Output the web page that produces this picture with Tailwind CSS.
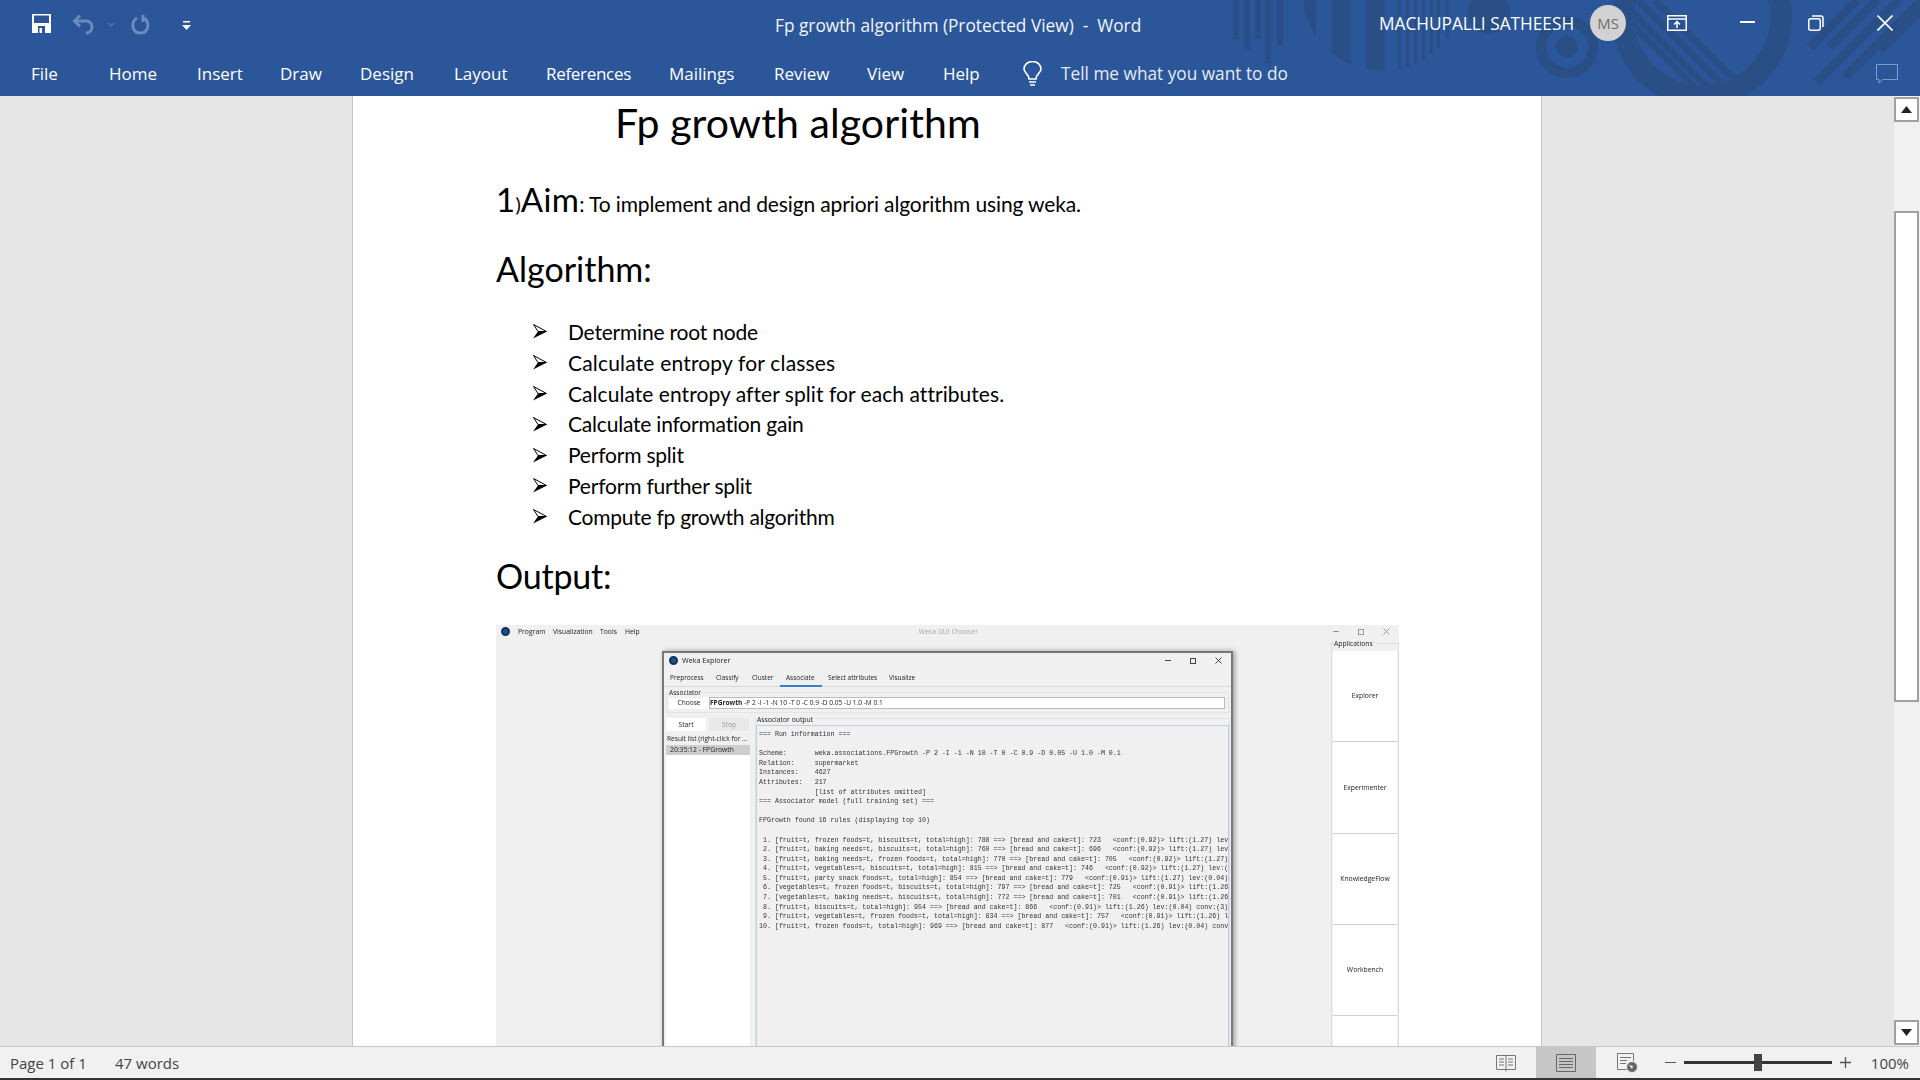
<!DOCTYPE html>
<html lang="en">
<head>
  <meta charset="UTF-8" />
  <meta name="viewport" content="width=device-width, initial-scale=1" />
  <title>Fp growth algorithm (Protected View) - Word</title>
  <script src="https://cdn.jsdelivr.net/npm/@tailwindcss/browser@4"></script>
</head>
<body class="h-screen w-screen overflow-hidden flex flex-col bg-[#e6e6e6] font-['Open_Sans',sans-serif]">

  <!-- Title bar and ribbon tabs -->
  <header class="relative h-[96px] shrink-0 bg-[#2b579a] text-white overflow-hidden">
    <!-- office background art -->
    <svg class="absolute inset-0" width="1920" height="96" viewBox="0 0 1920 96" fill="#2a4f86">
      <defs>
        <clipPath id="innerCircle"><circle cx="1702" cy="17" r="68" /></clipPath>
      </defs>
      <rect x="1233" y="0" width="6" height="39" />
      <rect x="1244" y="0" width="6" height="50" />
      <rect x="1255" y="0" width="6" height="39" />
      <rect x="1265" y="0" width="6" height="63" />
      <rect x="1277" y="0" width="6" height="46" />
      <path d="M1303 0 H1316 V36 Q1305 20 1303 0 Z" />
      <path d="M1332 0 H1351 V65 Q1340 60 1332 52 Z" />
      <path d="M1366 0 H1385 V71 Q1375 71 1366 69 Z" />
      <rect x="1398" y="0" width="3" height="69" />
      <rect x="1406" y="0" width="3" height="67" />
      <rect x="1414" y="0" width="3" height="64" />
      <rect x="1422" y="0" width="3" height="60" />
      <rect x="1430" y="0" width="3" height="54" />
      <rect x="1437" y="0" width="3" height="48" />
      <rect x="1446" y="0" width="3" height="38" />
      <circle cx="1489" cy="13" r="21" />
      <circle cx="1567" cy="47" r="26" fill="none" stroke="#2a4f86" stroke-width="10" />
      <circle cx="1567" cy="47" r="11" />
      <circle cx="1702" cy="17" r="79" fill="none" stroke="#2a4f86" stroke-width="22" />
      <g clip-path="url(#innerCircle)" stroke="#2a4f86" stroke-width="7">
        <line x1="1655" y1="0" x2="1755" y2="100" />
        <line x1="1638" y1="0" x2="1738" y2="100" />
        <line x1="1620" y1="0" x2="1720" y2="100" />
        <line x1="1608" y1="0" x2="1708" y2="100" />
      </g>
      <g stroke="#2a4f86" stroke-width="9">
        <line x1="1810" y1="47" x2="1857" y2="0" />
        <line x1="1830" y1="47" x2="1877" y2="0" />
        <line x1="1817" y1="82" x2="1899" y2="0" />
        <line x1="1845" y1="77" x2="1922" y2="0" />
        <line x1="1880" y1="50" x2="1930" y2="0" />
      </g>
    </svg>

    <div class="relative flex items-center h-[50px]">
      <!-- quick access toolbar -->
      <div class="flex items-center h-full pl-[32px] w-[400px] shrink-0">
        <svg width="19" height="19" viewBox="0 0 19 19" class="mb-[3px]">
          <path d="M0 0 H19 V19 H0 Z M2 1.5 V9 H17 V1.5 Z" fill="white" fill-rule="evenodd" />
          <rect x="6" y="12" width="7" height="7" fill="#2b579a" />
          <rect x="7.5" y="14" width="2.5" height="5" fill="white" />
        </svg>
        <svg width="24" height="20" viewBox="0 0 24 20" class="ml-[21px]" fill="none" stroke="#6b8cbd" stroke-width="3">
          <path d="M3 6 H14 C22 6 22 18 14 18" />
          <path d="M8 0.5 L2.5 6 L8 11.5" />
        </svg>
        <svg width="8" height="6" viewBox="0 0 8 6" class="ml-[11px]" fill="none" stroke="#6b8cbd"><path d="M1 1 L4 4 L7 1" /></svg>
        <svg width="19" height="20" viewBox="0 0 19 20" class="ml-[16px]" fill="none" stroke="#6b8cbd" stroke-width="3">
          <path d="M6 3 C0 6 0 18 9.5 18 C18 18 19 7 13 3" />
          <path d="M12 0 V7" />
        </svg>
        <svg width="9" height="9" viewBox="0 0 9 9" class="ml-[32px]" fill="white">
          <rect x="1" y="0" width="7" height="1.5" />
          <path d="M0 4 H9 L4.5 9 Z" />
        </svg>
      </div>
      <div class="pl-[375px] text-[17.3px] leading-[53px] whitespace-pre text-[#f2f5fa]">Fp growth algorithm (Protected View)  -  Word</div>
      <div class="absolute left-[1379px] top-0 leading-[47px] text-[17.25px] whitespace-nowrap">MACHUPALLI SATHEESH</div>
      <div class="absolute left-[1590px] top-[5px] w-[36px] h-[36px] rounded-full bg-[#d2d2d2] text-[#6f6f6f] text-[15px] flex items-center justify-center">MS</div>
      <!-- window buttons -->
      <svg class="absolute left-[1667px] top-[15px]" width="20" height="16" viewBox="0 0 20 16" fill="none" stroke="white" stroke-width="1.5">
        <rect x="0.75" y="0.75" width="18.5" height="14.5" />
        <line x1="1" y1="4" x2="19" y2="4" />
        <path d="M10 13 V6.5 M7 9.5 L10 6.5 L13 9.5" />
      </svg>
      <div class="absolute left-[1740px] top-[21px] w-[15px] h-[2px] bg-white"></div>
      <svg class="absolute left-[1808px] top-[15px]" width="16" height="16" viewBox="0 0 16 16" fill="none" stroke="white" stroke-width="1.5">
        <rect x="0.75" y="3.75" width="11.5" height="11.5" rx="2" />
        <path d="M4 1 H13 A2 2 0 0 1 15 3 V12" />
      </svg>
      <svg class="absolute left-[1877px] top-[15px]" width="16" height="16" viewBox="0 0 16 16" stroke="white" stroke-width="1.6">
        <path d="M0.5 0.5 L15.5 15.5 M15.5 0.5 L0.5 15.5" />
      </svg>
    </div>

    <nav class="relative flex items-center h-[46px] pl-[31px] pt-[1px] text-[17px] whitespace-nowrap">
      <span class="w-[78px]">File</span>
      <span class="w-[88px]">Home</span>
      <span class="w-[83px]">Insert</span>
      <span class="w-[80px]">Draw</span>
      <span class="w-[94px]">Design</span>
      <span class="w-[92px]">Layout</span>
      <span class="w-[123px] tracking-[-0.3px]">References</span>
      <span class="w-[105px]">Mailings</span>
      <span class="w-[93px]">Review</span>
      <span class="w-[76px]">View</span>
      <span class="w-[80px]">Help</span>
      <svg width="19" height="26" viewBox="0 0 19 26" fill="none" stroke="white" stroke-width="1.6">
        <path d="M6 18 C6 13 1 12 1 8 A8.5 7.5 0 0 1 18 8 C18 12 13 13 13 18 Z" />
        <path d="M6 21 H13 M7 24 H12" />
      </svg>
      <span class="ml-[19px] text-[17.25px] text-[#e4eaf4]">Tell me what you want to do</span>
      <svg class="absolute left-[1876px] top-[14px]" width="22" height="20" viewBox="0 0 22 20" fill="none" stroke="#7f9cc6" stroke-width="1">
        <path d="M0.5 0.5 H21.5 V15.5 H7 L3 19 V15.5 H0.5 Z" />
      </svg>
    </nav>
  </header>

  <!-- Document area -->
  <main class="flex flex-1 min-h-0">
    <div class="w-[352px] shrink-0"></div>
    <article class="w-[1190px] shrink-0 bg-white border-x border-[#c6c6c6] pl-[143px] overflow-hidden text-black font-['Lato',sans-serif]">
      <h1 class="h-[56px] leading-[54px] pl-[119px] text-[41px] tracking-[0.1px] whitespace-nowrap">Fp growth algorithm</h1>
      <p class="mt-[24px] h-[48px] leading-[46px] whitespace-nowrap text-[21px] tracking-[-0.13px]"><span class="text-[33px] tracking-[0.4px]">1</span><span class="text-[20px]">)</span><span class="text-[33px] tracking-[0.4px]">Aim</span>: To implement and design apriori algorithm using weka.</p>
      <h2 class="mt-[21px] h-[48px] leading-[48px] text-[34px]">Algorithm:</h2>
      <ul class="mt-[23.6px] text-[21px] tracking-[-0.2px]">
        <li class="h-[30.8px] leading-[30px] flex items-center"><svg width="14" height="15" viewBox="0 0 14 15" class="ml-[37px] mr-[21px] shrink-0"><path d="M0.5 0.5 L13.5 7.5 H5 Z" fill="white" stroke="black" stroke-width="1" /><path d="M0 14.5 L14 7.5 H5 Z" fill="black" /></svg>Determine root node</li>
        <li class="h-[30.8px] leading-[30px] flex items-center tracking-[0.18px]"><svg width="14" height="15" viewBox="0 0 14 15" class="ml-[37px] mr-[21px] shrink-0"><path d="M0.5 0.5 L13.5 7.5 H5 Z" fill="white" stroke="black" stroke-width="1" /><path d="M0 14.5 L14 7.5 H5 Z" fill="black" /></svg>Calculate entropy for classes</li>
        <li class="h-[30.8px] leading-[30px] flex items-center tracking-[0.05px]"><svg width="14" height="15" viewBox="0 0 14 15" class="ml-[37px] mr-[21px] shrink-0"><path d="M0.5 0.5 L13.5 7.5 H5 Z" fill="white" stroke="black" stroke-width="1" /><path d="M0 14.5 L14 7.5 H5 Z" fill="black" /></svg>Calculate entropy after split for each attributes.</li>
        <li class="h-[30.8px] leading-[30px] flex items-center"><svg width="14" height="15" viewBox="0 0 14 15" class="ml-[37px] mr-[21px] shrink-0"><path d="M0.5 0.5 L13.5 7.5 H5 Z" fill="white" stroke="black" stroke-width="1" /><path d="M0 14.5 L14 7.5 H5 Z" fill="black" /></svg>Calculate information gain</li>
        <li class="h-[30.8px] leading-[30px] flex items-center"><svg width="14" height="15" viewBox="0 0 14 15" class="ml-[37px] mr-[21px] shrink-0"><path d="M0.5 0.5 L13.5 7.5 H5 Z" fill="white" stroke="black" stroke-width="1" /><path d="M0 14.5 L14 7.5 H5 Z" fill="black" /></svg>Perform split</li>
        <li class="h-[30.8px] leading-[30px] flex items-center"><svg width="14" height="15" viewBox="0 0 14 15" class="ml-[37px] mr-[21px] shrink-0"><path d="M0.5 0.5 L13.5 7.5 H5 Z" fill="white" stroke="black" stroke-width="1" /><path d="M0 14.5 L14 7.5 H5 Z" fill="black" /></svg>Perform further split</li>
        <li class="h-[30.8px] leading-[30px] flex items-center tracking-[-0.25px]"><svg width="14" height="15" viewBox="0 0 14 15" class="ml-[37px] mr-[21px] shrink-0"><path d="M0.5 0.5 L13.5 7.5 H5 Z" fill="white" stroke="black" stroke-width="1" /><path d="M0 14.5 L14 7.5 H5 Z" fill="black" /></svg>Compute fp growth algorithm</li>
      </ul>
      <h2 class="mt-[20px] h-[48px] leading-[48px] text-[34px] tracking-[-0.2px]">Output:</h2>

      <!-- Weka screenshot pasted into the document -->
      <div class="relative mt-[25px] w-[903px] h-[421px] bg-[#f0f0f0] overflow-hidden text-[#222] text-[6.8px] font-['Open_Sans',sans-serif] blur-[0.25px]">
        <div class="flex items-center h-[13px] relative">
          <span class="ml-[5px] w-[9px] h-[9px] rounded-full bg-[#1c4f8f] border-2 border-[#12305c]"></span>
          <span class="ml-[8px] w-[35px]">Program</span>
          <span class="w-[47px]">Visualization</span>
          <span class="w-[25px]">Tools</span>
          <span>Help</span>
          <span class="ml-[279px] text-[#a8a8a8]">Weka GUI Chooser</span>
          <span class="ml-auto mr-[9px] flex gap-[19px] items-center text-[#999]">
            <span class="w-[6px] h-px bg-[#999]"></span>
            <span class="w-[6px] h-[6px] border border-[#999]"></span>
            <svg width="7" height="7" viewBox="0 0 7 7" stroke="#999"><path d="M0.5 0.5 L6.5 6.5 M6.5 0.5 L0.5 6.5" /></svg>
          </span>
        </div>

        <!-- Applications panel -->
        <div class="absolute left-[835px] top-[18px] right-0 bottom-0 border border-[#dcdcdc] border-b-0 px-[1px] pt-[7px]">
          <span class="absolute left-[2px] top-[-5px] bg-[#f0f0f0] pr-[3px]">Applications</span>
          <div class="flex flex-col gap-px bg-[#cfcfcf]">
            <div class="h-[90px] bg-white flex items-center justify-center">Explorer</div>
            <div class="h-[91px] bg-white flex items-center justify-center">Experimenter</div>
            <div class="h-[90px] bg-white flex items-center justify-center">KnowledgeFlow</div>
            <div class="h-[90px] bg-white flex items-center justify-center">Workbench</div>
            <div class="h-[40px] bg-white"></div>
          </div>
        </div>

        <!-- Explorer window, sits over the chooser -->
        <div class="absolute left-[166px] top-[26px] w-[571px] h-[400px] bg-[#f0f0f0] border-2 border-[#777] border-b-0 shadow-[2px_0_5px_rgba(0,0,0,0.35)] flex flex-col">
          <div class="flex items-center h-[15px] shrink-0 pl-[5px] text-[7.2px]">
            <span class="w-[9px] h-[9px] rounded-full bg-[#1c4f8f] border-2 border-[#12305c]"></span>
            <span class="ml-[4px]">Weka Explorer</span>
            <span class="ml-auto mr-[9px] flex gap-[19px] items-center">
              <span class="w-[6px] h-px bg-[#444]"></span>
              <span class="w-[6px] h-[6px] border border-[#444]"></span>
              <svg width="7" height="7" viewBox="0 0 7 7" stroke="#444"><path d="M0.5 0.5 L6.5 6.5 M6.5 0.5 L0.5 6.5" /></svg>
            </span>
          </div>
          <div class="flex h-[19px] shrink-0 pl-[1px] border-b border-[#d8d8d8] text-[6.5px] whitespace-nowrap">
            <span class="w-[46px] pl-[5px] leading-[19px]">Preprocess</span>
            <span class="w-[36px] pl-[5px] leading-[19px]">Classify</span>
            <span class="w-[33px] pl-[5px] leading-[19px]">Cluster</span>
            <span class="w-[42px] h-[19px] pl-[6px] leading-[19px] border-b-2 border-[#3c7fc0]">Associate</span>
            <span class="w-[61px] pl-[6px] leading-[19px]">Select attributes</span>
            <span class="pl-[6px] leading-[19px]">Visualize</span>
          </div>
          <div class="relative mt-[5px] mx-[2px] h-[21px] shrink-0 border border-[#e4e4e4] flex items-start pt-[4px] pl-[2px] pr-[3px] text-[6.6px]">
            <span class="absolute left-[2px] top-[-5px] bg-[#f0f0f0] pr-[2px]">Associator</span>
            <div class="w-[40px] h-[12px] bg-white leading-[12px] text-center">Choose</div>
            <div class="flex-1 h-[12px] bg-white border border-[#bbb] leading-[10px] whitespace-nowrap"><b>FPGrowth</b> -P 2 -I -1 -N 10 -T 0 -C 0.9 -D 0.05 -U 1.0 -M 0.1</div>
          </div>
          <div class="flex flex-1 min-h-0 mt-[5px] pl-[2px]">
            <div class="w-[84px] shrink-0 flex flex-col">
              <div class="flex gap-[3px] h-[13px] shrink-0">
                <div class="w-[40px] bg-white text-center leading-[13px]">Start</div>
                <div class="w-[40px] bg-[#e8e8e8] text-[#9a9a9a] text-center leading-[13px]">Stop</div>
              </div>
              <div class="h-[13px] shrink-0 leading-[13px] mt-[1px] pl-px whitespace-nowrap overflow-hidden text-[6.6px]">Result list (right-click for ...</div>
              <div class="flex-1 bg-white">
                <div class="h-[10px] bg-[#cdcdcd] pl-[4px] leading-[10px]">20:35:12 - FPGrowth</div>
              </div>
            </div>
            <div class="relative ml-[5px] w-[475px] flex flex-col pt-[6px] border-l border-t border-r border-[#e0e0e0]">
              <span class="absolute left-[1px] top-[-4px] bg-[#f0f0f0] pr-[2px]">Associator output</span>
              <pre class="flex-1 min-h-0 overflow-hidden border border-b-0 border-[#b8d2e8] pl-[2px] pt-[4px] font-['Liberation_Mono',monospace] text-[6.63px] leading-[9.58px] text-[#333]">=== Run information ===

Scheme:       weka.associations.FPGrowth -P 2 -I -1 -N 10 -T 0 -C 0.9 -D 0.05 -U 1.0 -M 0.1
Relation:     supermarket
Instances:    4627
Attributes:   217
              [list of attributes omitted]
=== Associator model (full training set) ===

FPGrowth found 16 rules (displaying top 10)

 1. [fruit=t, frozen foods=t, biscuits=t, total=high]: 788 ==> [bread and cake=t]: 723   &lt;conf:(0.92)&gt; lift:(1.27) lev:(0.04) conv:(3.35)
 2. [fruit=t, baking needs=t, biscuits=t, total=high]: 760 ==> [bread and cake=t]: 696   &lt;conf:(0.92)&gt; lift:(1.27) lev:(0.03) conv:(3.28)
 3. [fruit=t, baking needs=t, frozen foods=t, total=high]: 770 ==> [bread and cake=t]: 705   &lt;conf:(0.92)&gt; lift:(1.27) lev:(0.03) conv:(3.27)
 4. [fruit=t, vegetables=t, biscuits=t, total=high]: 815 ==> [bread and cake=t]: 746   &lt;conf:(0.92)&gt; lift:(1.27) lev:(0.03) conv:(3.26)
 5. [fruit=t, party snack foods=t, total=high]: 854 ==> [bread and cake=t]: 779   &lt;conf:(0.91)&gt; lift:(1.27) lev:(0.04) conv:(3.15)
 6. [vegetables=t, frozen foods=t, biscuits=t, total=high]: 797 ==> [bread and cake=t]: 725   &lt;conf:(0.91)&gt; lift:(1.26) lev:(0.03) conv:(3.06)
 7. [vegetables=t, baking needs=t, biscuits=t, total=high]: 772 ==> [bread and cake=t]: 701   &lt;conf:(0.91)&gt; lift:(1.26) lev:(0.03) conv:(3.01)
 8. [fruit=t, biscuits=t, total=high]: 954 ==> [bread and cake=t]: 866   &lt;conf:(0.91)&gt; lift:(1.26) lev:(0.04) conv:(3)
 9. [fruit=t, vegetables=t, frozen foods=t, total=high]: 834 ==> [bread and cake=t]: 757   &lt;conf:(0.91)&gt; lift:(1.26) lev:(0.03) conv:(3)
10. [fruit=t, frozen foods=t, total=high]: 969 ==> [bread and cake=t]: 877   &lt;conf:(0.91)&gt; lift:(1.26) lev:(0.04) conv:(2.98)</pre>
            </div>
          </div>
        </div>
      </div>
    </article>
    <div class="flex-1"></div>

    <!-- Vertical scrollbar -->
    <div class="w-[26px] shrink-0 bg-[#f1f1f1] flex flex-col pt-px">
      <div class="h-[25px] w-[25px] shrink-0 bg-white border-2 border-[#a0a0a0] flex items-center justify-center">
        <svg width="11" height="7" viewBox="0 0 11 7" fill="#222"><path d="M5.5 0 L11 7 H0 Z" /></svg>
      </div>
      <div class="h-[89px] shrink-0"></div>
      <div class="h-[491px] w-[25px] shrink-0 bg-white border-2 border-[#a0a0a0]"></div>
      <div class="flex-1"></div>
      <div class="h-[25px] w-[25px] shrink-0 bg-white border-2 border-[#a0a0a0] flex items-center justify-center mb-px">
        <svg width="11" height="7" viewBox="0 0 11 7" fill="#222"><path d="M0 0 H11 L5.5 7 Z" /></svg>
      </div>
    </div>
  </main>

  <!-- Status bar -->
  <footer class="relative h-[34px] shrink-0 bg-[#f1f1f1] border-t border-[#c6c6c6] border-b-2 border-b-[#333] flex items-center text-[#444] text-[15px]">
    <span class="ml-[10px] w-[105px] pt-[2px]">Page 1 of 1</span>
    <span class="pt-[2px]">47 words</span>
    <div class="ml-auto flex items-center h-full">
      <svg width="20" height="18" viewBox="0 0 20 18" fill="none" stroke="#777" class="mr-[20px]">
        <path d="M0.5 1.5 H19.5 V15.5 H0.5 Z M10 1.5 V17.5 M3 5 H8 M3 8 H8 M3 11 H8 M12 5 H17 M12 8 H17 M12 11 H17" />
      </svg>
      <div class="w-[60px] h-full bg-[#c6c6c6] flex items-center justify-center">
        <svg width="20" height="18" viewBox="0 0 20 18" fill="none" stroke="#666">
          <path d="M0.5 0.5 H19.5 V17.5 H0.5 Z M3 4.5 H17 M3 7.5 H17 M3 10.5 H17 M3 13.5 H17" />
        </svg>
      </div>
      <svg width="21" height="20" viewBox="0 0 21 20" fill="none" stroke="#777" class="ml-[21px]">
        <path d="M11 16.5 H0.5 V0.5 H16.5 V8 M3 4.5 H14 M3 7.5 H10 M3 10.5 H9" />
        <circle cx="15" cy="14" r="5.5" fill="#666" stroke="#f1f1f1" />
        <path d="M12 12 L16 13 L15 16 Z" fill="#f1f1f1" stroke="none" />
      </svg>
      <div class="w-[11px] h-[1.5px] bg-[#555] ml-[27px]"></div>
      <div class="relative w-[148px] h-[2.5px] bg-[#333] ml-[8px]">
        <div class="absolute left-[70px] top-[-7.5px] w-[8px] h-[17px] bg-[#444]"></div>
      </div>
      <svg width="11" height="11" viewBox="0 0 11 11" stroke="#555" stroke-width="1.3" class="ml-[8px]"><path d="M0 5.5 H11 M5.5 0 V11" /></svg>
      <span class="ml-[20px] mr-[11px] pt-[2px] text-[15px]">100%</span>
    </div>
  </footer>
</body>
</html>
